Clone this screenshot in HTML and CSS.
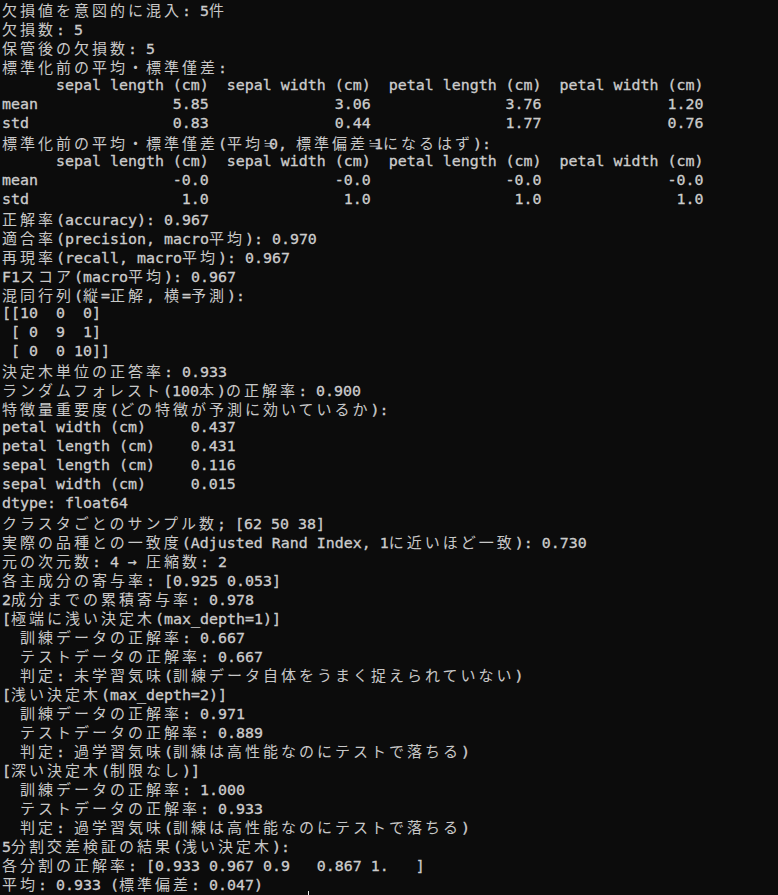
FILE: index.html
```html
<!DOCTYPE html>
<html lang="ja">
<head>
<meta charset="utf-8">
<title>Terminal</title>
<link rel="stylesheet" href="styles.css">
</head>
<body>
<div class="term">
<div class="ln"><span class="j">欠損値を意図的に混入</span>: 5<span class="j">件</span></div>
<div class="ln"><span class="j">欠損数</span>: 5</div>
<div class="ln"><span class="j">保管後の欠損数</span>: 5</div>
<div class="ln"><span class="j">標準化前の平均・標準僅差</span>:</div>
<div class="ln">      sepal length (cm)  sepal width (cm)  petal length (cm)  petal width (cm)</div>
<div class="ln">mean               5.85              3.06               3.76              1.20</div>
<div class="ln">std                0.83              0.44               1.77              0.76</div>
<div class="ln"><span class="j">標準化前の平均・標準僅差</span>(<span class="j">平均</span><span class="j n">≒</span>0, <span class="j">標準偏差</span><span class="j n">≒</span>1<span class="j">になるはず</span>):</div>
<div class="ln">      sepal length (cm)  sepal width (cm)  petal length (cm)  petal width (cm)</div>
<div class="ln">mean               -0.0              -0.0               -0.0              -0.0</div>
<div class="ln">std                 1.0               1.0                1.0               1.0</div>
<div class="ln"><span class="j">正解率</span>(accuracy): 0.967</div>
<div class="ln"><span class="j">適合率</span>(precision, macro<span class="j">平均</span>): 0.970</div>
<div class="ln"><span class="j">再現率</span>(recall, macro<span class="j">平均</span>): 0.967</div>
<div class="ln">F1<span class="j">スコア</span>(macro<span class="j">平均</span>): 0.967</div>
<div class="ln"><span class="j">混同行列</span>(<span class="j">縦</span>=<span class="j">正解</span>, <span class="j">横</span>=<span class="j">予測</span>):</div>
<div class="ln">[[10  0  0]</div>
<div class="ln"> [ 0  9  1]</div>
<div class="ln"> [ 0  0 10]]</div>
<div class="ln"><span class="j">決定木単位の正答率</span>: 0.933</div>
<div class="ln"><span class="j">ランダムフォレスト</span>(100<span class="j">本</span>)<span class="j">の正解率</span>: 0.900</div>
<div class="ln"><span class="j">特徴量重要度</span>(<span class="j">どの特徴が予測に効いているか</span>):</div>
<div class="ln">petal width (cm)     0.437</div>
<div class="ln">petal length (cm)    0.431</div>
<div class="ln">sepal length (cm)    0.116</div>
<div class="ln">sepal width (cm)     0.015</div>
<div class="ln">dtype: float64</div>
<div class="ln"><span class="j">クラスタごとのサンプル数</span>; [62 50 38]</div>
<div class="ln"><span class="j">実際の品種との一致度</span>(Adjusted Rand Index, 1<span class="j">に近いほど一致</span>): 0.730</div>
<div class="ln"><span class="j">元の次元数</span>: 4 → <span class="j">圧縮数</span>: 2</div>
<div class="ln"><span class="j">各主成分の寄与率</span>: [0.925 0.053]</div>
<div class="ln">2<span class="j">成分までの累積寄与率</span>: 0.978</div>
<div class="ln">[<span class="j">極端に浅い決定木</span>(max_depth=1)]</div>
<div class="ln">  <span class="j">訓練データの正解率</span>: 0.667</div>
<div class="ln">  <span class="j">テストデータの正解率</span>: 0.667</div>
<div class="ln">  <span class="j">判定</span>: <span class="j">未学習気味</span>(<span class="j">訓練データ自体をうまく捉えられていない</span>)</div>
<div class="ln">[<span class="j">浅い決定木</span>(max_depth=2)]</div>
<div class="ln">  <span class="j">訓練データの正解率</span>: 0.971</div>
<div class="ln">  <span class="j">テストデータの正解率</span>: 0.889</div>
<div class="ln">  <span class="j">判定</span>: <span class="j">過学習気味</span>(<span class="j">訓練は高性能なのにテストで落ちる</span>)</div>
<div class="ln">[<span class="j">深い決定木</span>(<span class="j">制限なし</span>)]</div>
<div class="ln">  <span class="j">訓練データの正解率</span>: 1.000</div>
<div class="ln">  <span class="j">テストデータの正解率</span>: 0.933</div>
<div class="ln">  <span class="j">判定</span>: <span class="j">過学習気味</span>(<span class="j">訓練は高性能なのにテストで落ちる</span>)</div>
<div class="ln">5<span class="j">分割交差検証の結果</span>(<span class="j">浅い決定木</span>):</div>
<div class="ln"><span class="j">各分割の正解率</span>: [0.933 0.967 0.9   0.867 1.   ]</div>
<div class="ln"><span class="j">平均</span>: 0.933 (<span class="j">標準偏差</span>: 0.047)</div>
</div>
<div class="cursor"></div>
</body>
</html>
```
FILE: styles.css
```css
html, body {
  margin: 0;
  padding: 0;
  background: #0c0c0c;
  height: 100%;
  overflow: hidden;
}
.term {
  padding: 0 0 0 2px;
  color: #cccccc;
  font-family: "DejaVu Sans Mono", "Liberation Mono", monospace;
  font-size: 14.95px;
  line-height: 19px;
  -webkit-text-stroke: 0.3px #cccccc;
}
.ln {
  height: 19px;
  white-space: pre;
}
.j {
  font-family: "Noto Sans CJK JP", "Noto Sans CJK SC", sans-serif;
  font-size: 15px;
  letter-spacing: 3px;
  color: #c8c8c8;
  -webkit-text-stroke: 0;
}
.j.n {
  letter-spacing: -6px;
}
.cursor {
  position: absolute;
  left: 308px;
  top: 891px;
  width: 1px;
  height: 4px;
  background: #e8e8e8;
}
```
